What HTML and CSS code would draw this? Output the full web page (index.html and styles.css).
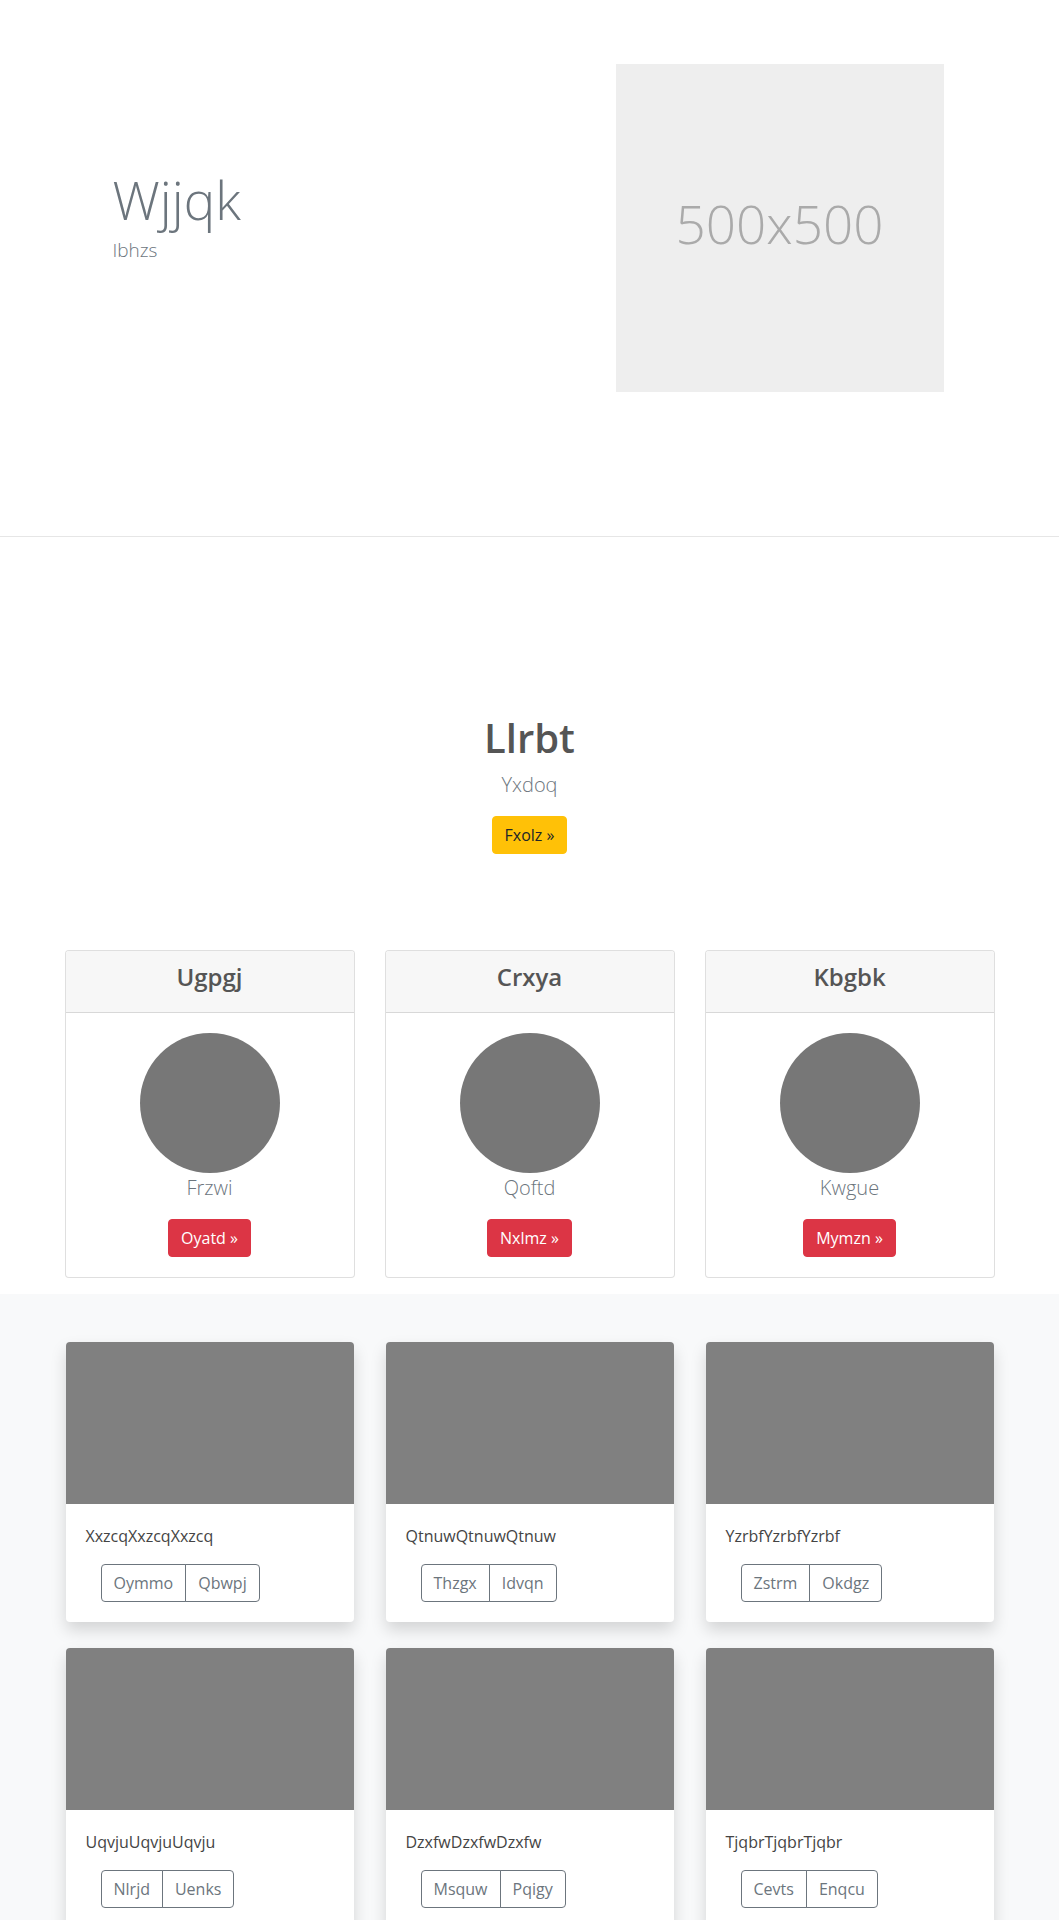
FILE: index.html
```html
<!DOCTYPE html>
<html lang="en">
<head>
<meta charset="utf-8">
<title>Wjjqk</title>
<link rel="stylesheet" href="styles.css">
</head>
<body>
<section class="hero">
  <div class="container hero-row">
    <div class="hero-text">
      <h1 class="hero-title">Wjjqk</h1>
      <p class="hero-sub">Ibhzs</p>
    </div>
    <div class="hero-media">
      <div class="placeholder">500x500</div>
    </div>
  </div>
</section>

<section class="pricing">
  <div class="container">
    <div class="pricing-header">
      <h1 class="pricing-title">Llrbt</h1>
      <p class="lead muted">Yxdoq</p>
      <a class="btn btn-warning" href="#">Fxolz &raquo;</a>
    </div>
    <div class="grid3 pricing-cards">
      <div class="pcard">
        <div class="pcard-header"><h4>Ugpgj</h4></div>
        <div class="pcard-body">
          <div class="avatar"></div>
          <p class="lead muted">Frzwi</p>
          <a class="btn btn-danger" href="#">Oyatd &raquo;</a>
        </div>
      </div>
      <div class="pcard">
        <div class="pcard-header"><h4>Crxya</h4></div>
        <div class="pcard-body">
          <div class="avatar"></div>
          <p class="lead muted">Qoftd</p>
          <a class="btn btn-danger" href="#">Nxlmz &raquo;</a>
        </div>
      </div>
      <div class="pcard">
        <div class="pcard-header"><h4>Kbgbk</h4></div>
        <div class="pcard-body">
          <div class="avatar"></div>
          <p class="lead muted">Kwgue</p>
          <a class="btn btn-danger" href="#">Mymzn &raquo;</a>
        </div>
      </div>
    </div>
  </div>
</section>

<section class="album">
  <div class="container">
    <div class="grid3 album-grid">
      <div class="acard">
        <div class="thumb"></div>
        <div class="acard-body">
          <p class="acard-text">XxzcqXxzcqXxzcq</p>
          <div class="btn-group"><a class="btn btn-outline" href="#">Oymmo</a><a class="btn btn-outline" href="#">Qbwpj</a></div>
        </div>
      </div>
      <div class="acard">
        <div class="thumb"></div>
        <div class="acard-body">
          <p class="acard-text">QtnuwQtnuwQtnuw</p>
          <div class="btn-group"><a class="btn btn-outline" href="#">Thzgx</a><a class="btn btn-outline" href="#">Idvqn</a></div>
        </div>
      </div>
      <div class="acard">
        <div class="thumb"></div>
        <div class="acard-body">
          <p class="acard-text">YzrbfYzrbfYzrbf</p>
          <div class="btn-group"><a class="btn btn-outline" href="#">Zstrm</a><a class="btn btn-outline" href="#">Okdgz</a></div>
        </div>
      </div>
      <div class="acard">
        <div class="thumb"></div>
        <div class="acard-body">
          <p class="acard-text">UqvjuUqvjuUqvju</p>
          <div class="btn-group"><a class="btn btn-outline" href="#">Nlrjd</a><a class="btn btn-outline" href="#">Uenks</a></div>
        </div>
      </div>
      <div class="acard">
        <div class="thumb"></div>
        <div class="acard-body">
          <p class="acard-text">DzxfwDzxfwDzxfw</p>
          <div class="btn-group"><a class="btn btn-outline" href="#">Msquw</a><a class="btn btn-outline" href="#">Pqigy</a></div>
        </div>
      </div>
      <div class="acard">
        <div class="thumb"></div>
        <div class="acard-body">
          <p class="acard-text">TjqbrTjqbrTjqbr</p>
          <div class="btn-group"><a class="btn btn-outline" href="#">Cevts</a><a class="btn btn-outline" href="#">Enqcu</a></div>
        </div>
      </div>
    </div>
  </div>
</section>
</body>
</html>
```
FILE: styles.css
```css
* { box-sizing: border-box; }
html, body { margin: 0; padding: 0; }
body {
  font-family: "Open Sans", "Noto Sans", sans-serif;
  font-size: 16px;
  line-height: 1.5;
  color: #212529;
  background: #fff;
}
h1, h4, p { margin: 0; }

.container {
  width: 960px;
  margin: 0 auto;
  padding: 0 15px;
}

/* Hero */
.hero { border-bottom: 1px solid #e6e6e6; }
.hero-row {
  display: grid;
  grid-template-columns: 1fr 1fr;
  column-gap: 30px;
  align-items: center;
  padding-top: 64px;
  padding-bottom: 144px;
}
.hero-text { padding-left: 48px; padding-bottom: 23px; }
.hero-title {
  font-size: 53px;
  font-weight: 300;
  line-height: 1.2;
  color: #6c757d;
  margin-bottom: 4px;
}
.hero-sub {
  font-size: 19px;
  font-weight: 300;
  color: #6c757d;
  line-height: 1.5;
}
.hero-media { display: flex; }
.placeholder {
  width: 328px;
  height: 328px;
  margin-left: 71px;
  padding-bottom: 8px;
  background: #eeeeee;
  color: #aaaaaa;
  font-size: 53px;
  font-weight: 300;
  display: flex;
  align-items: center;
  justify-content: center;
}

/* Pricing */
.pricing { padding-top: 177px; padding-bottom: 16px; }
.pricing-header { text-align: center; margin-bottom: 96px; }
.pricing-title {
  font-size: 40px;
  font-weight: 600;
  line-height: 1.2;
  color: #555;
  margin-bottom: 8px;
}
.lead { font-size: 20px; font-weight: 300; line-height: 1.5; }
.muted { color: #6c757d; }
.pricing-header .lead { margin-bottom: 16px; }

.btn {
  display: inline-block;
  padding: 6px 12px;
  font-size: 16px;
  line-height: 1.5;
  border: 1px solid transparent;
  border-radius: 4px;
  text-decoration: none;
}
.btn-warning { background: #ffc107; border-color: #ffc107; color: #212529; }
.btn-danger { background: #dc3545; border-color: #dc3545; color: #fff; }

.grid3 {
  display: grid;
  grid-template-columns: repeat(3, 1fr);
  column-gap: 30px;
}
.pcard {
  border: 1px solid rgba(0,0,0,.125);
  border-radius: 4px;
  background: #fff;
  text-align: center;
  overflow: hidden;
}
.pcard-header {
  background: #f7f7f7;
  border-bottom: 1px solid rgba(0,0,0,.125);
  padding: 12px 20px;
}
.pcard-header h4 {
  font-size: 24px;
  font-weight: 600;
  line-height: 1.2;
  color: #555;
  margin-bottom: 8px;
}
.pcard-body { padding: 20px; }
.avatar {
  width: 140px;
  height: 140px;
  border-radius: 50%;
  background: #777;
  margin: 0 auto;
}
.pcard-body .lead { margin-bottom: 16px; }

/* Album */
.album {
  background: #f8f9fa;
  padding-top: 48px;
  padding-bottom: 48px;
}
.album-grid { row-gap: 26px; }
.acard {
  margin: 0 1px;
  background: #fff;
  border-radius: 4px;
  overflow: hidden;
  box-shadow: 0 8px 16px rgba(0,0,0,.15);
}
.thumb {
  background: #808080;
  aspect-ratio: 16 / 9;
}
.acard-body { padding: 20px; }
.acard-text { margin-bottom: 16px; color: #444; }
.btn-group { display: inline-flex; margin-left: 15px; }
.btn-outline {
  color: #6c757d;
  border-color: #6c757d;
  background: transparent;
}
.btn-group .btn-outline:first-child { border-top-right-radius: 0; border-bottom-right-radius: 0; }
.btn-group .btn-outline + .btn-outline { margin-left: -1px; border-top-left-radius: 0; border-bottom-left-radius: 0; }
```
